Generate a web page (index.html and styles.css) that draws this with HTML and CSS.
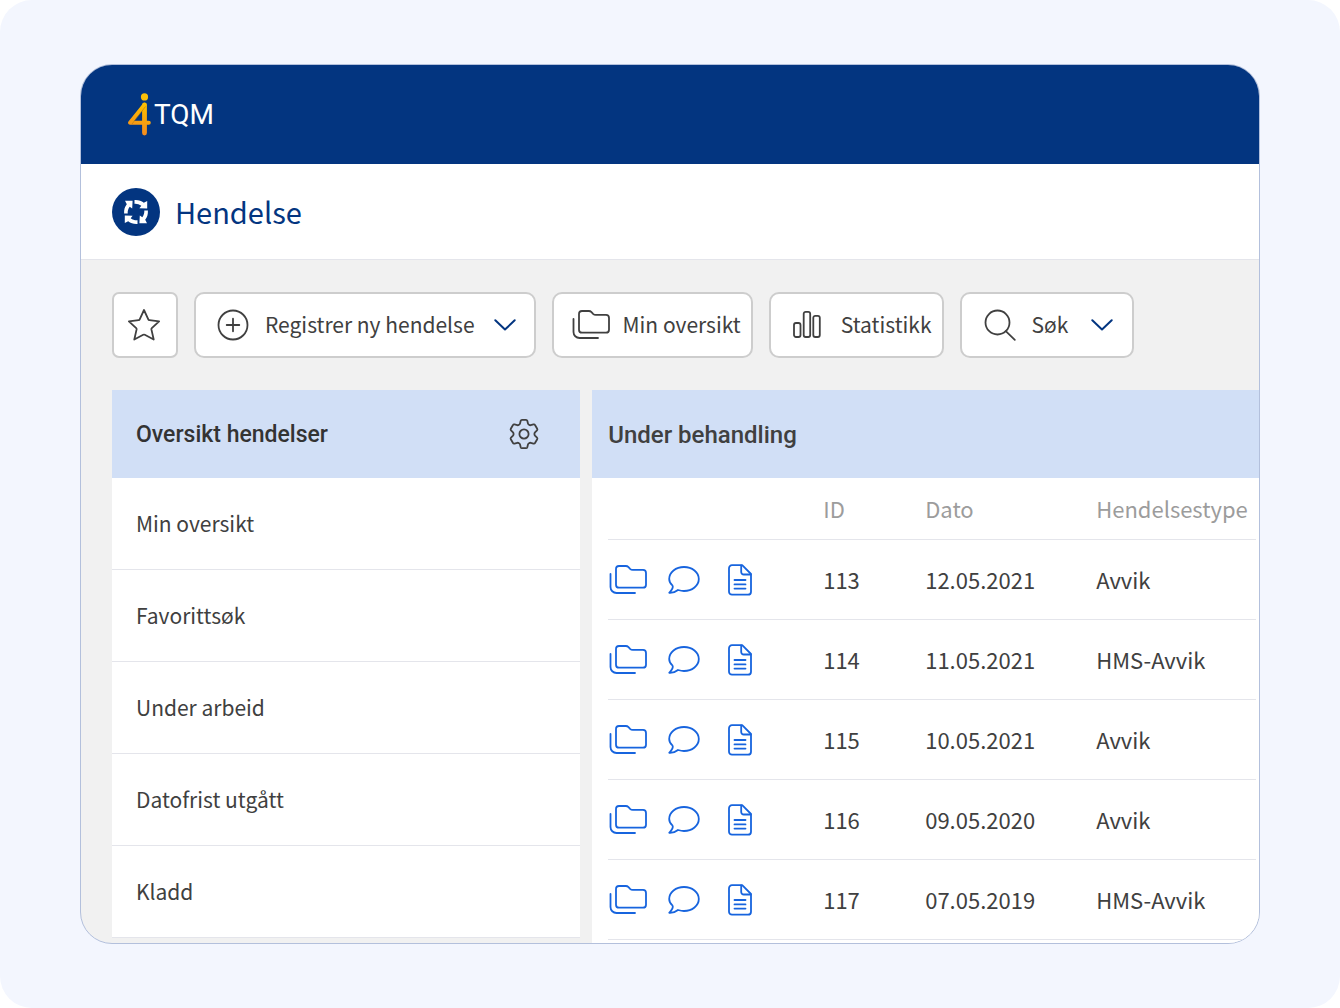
FILE: index.html
```html
<!DOCTYPE html>
<html lang="nb">
<head>
<meta charset="utf-8">
<meta name="viewport" content="width=device-width, initial-scale=1">
<title>4TQM – Hendelse</title>
<link rel="stylesheet" href="styles.css">
</head>
<body>
<svg class="sprite" aria-hidden="true">
  <defs>
    <symbol id="i-folders" viewBox="0 0 38 30">
      <path d="M1.500 9v13a6 6 0 0 0 6 6H26"/>
      <path d="M10 1h6.800q1.600 0 2.700 1.100l1.600 1.700q1.100 1.100 2.700 1.100h10.200a3 3 0 0 1 3 3v11.800a3 3 0 0 1-3 3H10a3 3 0 0 1-3-3V4a3 3 0 0 1 3-3z"/>
    </symbol>
    <symbol id="i-chat" viewBox="0 0 32 28">
      <path d="M4.400 19.400C2.300 17.600 1.200 15.300 1.200 13 1.200 6.400 7.800 1 16 1s14.800 5.400 14.800 12-6.600 12-14.800 12c-2.200 0-4.200-.5-6-1C7.500 26 4.500 27 1.200 26.800 3 25 6 22 4.400 19.400z"/>
    </symbol>
    <symbol id="i-doc" viewBox="0 0 24 32">
      <path d="M4 1.200h10.200L23 10v17.700a3 3 0 0 1-3 3H4a3 3 0 0 1-3-3V4.200a3 3 0 0 1 3-3z"/>
      <path d="M13.200 1.500V8a2.500 2.500 0 0 0 2.500 2.500h7M6.500 16h11M6.500 20.400h11M6.500 24.600h11"/>
    </symbol>
    <symbol id="i-chevron" viewBox="0 0 22 12">
      <path d="M1.300 1.300 11 10.500l9.700-9.200"/>
    </symbol>
  </defs>
</svg>

<div class="stage">
  <div class="window">
    <header class="brand-bar">
      <a class="brand" href="#">
        <svg class="brand-mark" viewBox="0 0 25 44" aria-hidden="true">
          <defs>
            <linearGradient id="gold" gradientUnits="userSpaceOnUse" x1="20" y1="0" x2="8" y2="40">
              <stop offset="0" stop-color="#fdd000"/>
              <stop offset=".5" stop-color="#fbb005"/>
              <stop offset="1" stop-color="#f48a20"/>
            </linearGradient>
          </defs>
          <g stroke="url(#gold)" stroke-linecap="round" stroke-linejoin="round" fill="none">
            <path d="M17.500 12v28" stroke-width="4.800"/>
            <path d="M17.500 11.800 3 29.800h18.800" stroke-width="4"/>
          </g>
          <path d="M18.500 13.500 5 31" stroke="#a8700c" stroke-width=".5"/>
          <circle cx="17.500" cy="3.900" r="3.600" fill="#fbc008"/>
        </svg>
        <span class="brand-name">TQM</span>
      </a>
    </header>

    <div class="title-bar">
      <svg class="title-icon" viewBox="-24 -24 48 48" aria-hidden="true">
        <circle r="24" fill="#033580"/>
        <g fill="#fff">
          <path id="arm" d="M-1.500-11.900C2.500-12.100 5.300-11.200 7.800-9.200L11.200-11V-3.400L3.400-3.800 5.300-6.300C3.300-7.800 1-8.500-1.500-8.300Z"/>
          <use href="#arm" transform="rotate(90)"/>
          <use href="#arm" transform="rotate(180)"/>
          <use href="#arm" transform="rotate(270)"/>
        </g>
      </svg>
      <h1 class="title">Hendelse</h1>
    </div>

    <main class="content">
      <div class="toolbar">
        <button class="tool tool-star" type="button" aria-label="Favoritt">
          <svg class="icon" width="32" height="32" viewBox="0 0 32 32"><path d="M16 1l4.300 9.300q.3.700 1.100.8l9.700 1.200-7.300 6.900q-.5.500-.4 1.200L25.700 30.500l-8.900-4.700q-.8-.4-1.600 0L6.300 30.500l2.300-10.100q.1-.7-.4-1.200L.9 12.300l9.700-1.200q.8-.1 1.100-.8z"/></svg>
        </button>
        <button class="tool tool-new" type="button">
          <svg class="icon" width="32" height="32" viewBox="0 0 32 32"><circle cx="16" cy="16" r="14.500"/><path d="M16 9.700v12.600M9.700 16h12.600"/></svg>
          <span>Registrer ny hendelse</span>
          <svg class="chevron" width="22" height="12"><use href="#i-chevron"/></svg>
        </button>
        <button class="tool tool-overview" type="button">
          <svg class="icon" width="38" height="30"><use href="#i-folders"/></svg>
          <span>Min oversikt</span>
        </button>
        <button class="tool tool-stats" type="button">
          <svg class="icon" width="28" height="30" viewBox="0 0 28 30"><rect x="1" y="13" width="6.500" height="14" rx="2"/><rect x="10.700" y="1.800" width="6.500" height="25.200" rx="2"/><rect x="20.300" y="5.800" width="6.500" height="21.200" rx="2"/></svg>
          <span>Statistikk</span>
        </button>
        <button class="tool tool-search" type="button">
          <svg class="icon" width="32" height="32" viewBox="0 0 32 32"><circle cx="13.500" cy="13.500" r="12"/><path d="M21.800 22.200l9 8.600"/></svg>
          <span>Søk</span>
          <svg class="chevron" width="22" height="12"><use href="#i-chevron"/></svg>
        </button>
      </div>

      <div class="panels">
        <section class="panel">
          <div class="panel-head panel-head-list">
            <h2 class="panel-title">Oversikt hendelser</h2>
            <button class="gear" type="button" aria-label="Innstillinger">
              <svg class="icon" width="32" height="32" viewBox="-16 -16 32 32"><path d="M-2-14.200H2Q3-14.200 3.300-13.200L4-10.400Q4.200-9.600 5-9.200 5.900-8.600 6.700-8.800L9.500-9.600Q10.500-9.900 11-9L13.200-5.300Q13.700-4.400 13-3.700L11-1.700Q10.400-1 10.400 0 10.400 1 11 1.700L13 3.700Q13.700 4.400 13.200 5.300L11 9Q10.500 9.900 9.500 9.600L6.700 8.800Q5.900 8.600 5 9.200 4.200 9.600 4 10.400L3.300 13.200Q3 14.200 2 14.200H-2Q-3 14.200-3.300 13.200L-4 10.400Q-4.200 9.600-5 9.200-5.900 8.600-6.700 8.800L-9.500 9.600Q-10.500 9.900-11 9L-13.200 5.300Q-13.700 4.400-13 3.700L-11 1.700Q-10.400 1-10.400 0-10.400-1-11-1.700L-13-3.700Q-13.700-4.400-13.200-5.300L-11-9Q-10.500-9.900-9.500-9.600L-6.700-8.800Q-5.900-8.600-5-9.200-4.200-9.600-4-10.400L-3.300-13.200Q-3-14.200-2-14.200Z"/><circle r="4.600"/></svg>
            </button>
          </div>
          <nav class="list">
            <a href="#">Min oversikt</a>
            <a href="#">Favorittsøk</a>
            <a href="#">Under arbeid</a>
            <a href="#">Datofrist utgått</a>
            <a href="#">Kladd</a>
          </nav>
        </section>

        <section class="panel panel-table">
          <div class="panel-head panel-head-table">
            <h2 class="panel-title">Under behandling</h2>
          </div>
          <div class="table-wrap">
            <table class="events">
              <colgroup><col class="col-actions"><col class="col-id"><col class="col-date"><col></colgroup>
              <thead>
                <tr><td></td><th scope="col">ID</th><th scope="col">Dato</th><th scope="col">Hendelsestype</th></tr>
              </thead>
              <tbody>
                <tr>
                  <td><div class="actions"><a href="#" aria-label="Mapper"><svg width="38" height="30"><use href="#i-folders"/></svg></a><a href="#" aria-label="Kommentarer"><svg width="32" height="28"><use href="#i-chat"/></svg></a><a href="#" aria-label="Dokument"><svg width="24" height="32"><use href="#i-doc"/></svg></a></div></td>
                  <td>113</td><td>12.05.2021</td><td>Avvik</td>
                </tr>
                <tr>
                  <td><div class="actions"><a href="#" aria-label="Mapper"><svg width="38" height="30"><use href="#i-folders"/></svg></a><a href="#" aria-label="Kommentarer"><svg width="32" height="28"><use href="#i-chat"/></svg></a><a href="#" aria-label="Dokument"><svg width="24" height="32"><use href="#i-doc"/></svg></a></div></td>
                  <td>114</td><td>11.05.2021</td><td>HMS-Avvik</td>
                </tr>
                <tr>
                  <td><div class="actions"><a href="#" aria-label="Mapper"><svg width="38" height="30"><use href="#i-folders"/></svg></a><a href="#" aria-label="Kommentarer"><svg width="32" height="28"><use href="#i-chat"/></svg></a><a href="#" aria-label="Dokument"><svg width="24" height="32"><use href="#i-doc"/></svg></a></div></td>
                  <td>115</td><td>10.05.2021</td><td>Avvik</td>
                </tr>
                <tr>
                  <td><div class="actions"><a href="#" aria-label="Mapper"><svg width="38" height="30"><use href="#i-folders"/></svg></a><a href="#" aria-label="Kommentarer"><svg width="32" height="28"><use href="#i-chat"/></svg></a><a href="#" aria-label="Dokument"><svg width="24" height="32"><use href="#i-doc"/></svg></a></div></td>
                  <td>116</td><td>09.05.2020</td><td>Avvik</td>
                </tr>
                <tr>
                  <td><div class="actions"><a href="#" aria-label="Mapper"><svg width="38" height="30"><use href="#i-folders"/></svg></a><a href="#" aria-label="Kommentarer"><svg width="32" height="28"><use href="#i-chat"/></svg></a><a href="#" aria-label="Dokument"><svg width="24" height="32"><use href="#i-doc"/></svg></a></div></td>
                  <td>117</td><td>07.05.2019</td><td>HMS-Avvik</td>
                </tr>
              </tbody>
            </table>
          </div>
        </section>
      </div>
    </main>
  </div>
</div>
</body>
</html>
```

FILE: styles.css
```css
:root {
  --navy: #033580;
  --blue: #1764de;
  --ink: #404040;
  --muted: #9c9c9c;
  --line: #e4e5eb;
  --grey: #f1f1f1;
  --pale: #d1dff6;
}

*,
*::before,
*::after {
  box-sizing: border-box;
}

body {
  margin: 0;
  background: #fff;
  color: var(--ink);
  font: 21px/32px "Noto Sans CJK SC", "Noto Sans", sans-serif;
}

.sprite {
  position: absolute;
  width: 0;
  height: 0;
}

h1,
h2 {
  margin: 0;
}

a {
  color: inherit;
  text-decoration: none;
}

button {
  font: inherit;
  color: inherit;
  cursor: pointer;
}

.stage {
  display: flex;
  min-height: 100vh;
  padding: 64px 80px;
  border-radius: 32px;
  background: #f3f6fe;
}

.window {
  display: flex;
  flex: 1;
  flex-direction: column;
  min-width: 0;
  overflow: hidden;
  border: 1px solid #b3c0dc;
  border-radius: 32px;
  background: var(--grey);
}

/* Brand bar */
.brand-bar {
  display: flex;
  align-items: center;
  height: 99px;
  padding: 0 46px;
  background: var(--navy);
}

.brand {
  display: flex;
  align-items: center;
  color: #fff;
}

.brand-mark {
  width: 25px;
  height: 44px;
}

.brand-name {
  padding-left: 2px;
  font: 28px/32px Roboto, sans-serif;
}

/* Page title */
.title-bar {
  display: flex;
  align-items: center;
  gap: 15px;
  height: 96px;
  padding: 0 31px;
  border-bottom: 1px solid var(--line);
  background: #fff;
}

.title-icon {
  width: 48px;
  height: 48px;
}

.title {
  padding-bottom: 2px;
  color: var(--navy);
  font-size: 29px;
  font-weight: 400;
}

/* Toolbar */
.content {
  display: flex;
  flex: 1;
  flex-direction: column;
  gap: 32px;
  padding: 32px 0 0 31px;
}

.toolbar {
  display: flex;
  flex-wrap: wrap;
  gap: 16px;
}

.tool {
  display: flex;
  align-items: center;
  height: 66px;
  border: 2px solid #cdcdcd;
  border-radius: 10px;
  background: #fff;
  white-space: nowrap;
}

.tool span {
  padding-bottom: 2px;
}

.tool-star {
  justify-content: center;
  width: 66px;
  padding: 0 2px 0 0;
  border-radius: 7px;
}

.tool-new {
  gap: 16px;
  padding: 0 18px 0 21px;
}

.tool-new .chevron {
  margin-left: 3px;
}

.tool-overview {
  gap: 13px;
  padding: 0 10px 0 18px;
}

.tool-stats {
  gap: 20px;
  padding: 0 10px 0 22px;
}

.tool-search {
  gap: 16px;
  padding: 0 19px 0 22px;
}

.tool-search .chevron {
  margin-left: 7px;
}

.icon,
.chevron,
.actions svg {
  display: block;
  flex: none;
  fill: none;
  stroke: currentColor;
  stroke-width: 1.8;
  stroke-linecap: round;
  stroke-linejoin: round;
}

.chevron {
  color: var(--navy);
  stroke-width: 2;
}

/* Panels */
.panels {
  display: grid;
  flex: 1;
  grid-template-columns: minmax(0, 33fr) minmax(0, 47fr);
  align-items: start;
  gap: 12px;
}

.panel {
  background: #fff;
}

.panel-table {
  align-self: stretch;
}

.panel-head {
  display: flex;
  align-items: center;
  justify-content: space-between;
  height: 88px;
  background: var(--pale);
}

.panel-head-list {
  padding: 0 40px 0 24px;
  color: #333;
}

.panel-head-table {
  padding: 0 16px;
}

.panel-title {
  padding-top: 2px;
  font: 500 23px/32px Roboto, sans-serif;
}

.panel-head-table .panel-title {
  font-size: 24px;
}

.gear {
  padding: 0;
  border: 0;
  background: none;
  color: var(--ink);
}

.list a {
  display: flex;
  align-items: center;
  height: 92px;
  padding: 0 24px 2px;
  border-bottom: 1px solid var(--line);
}

/* Events table */
.table-wrap {
  padding: 0 3px 3px 16px;
}

.events {
  width: 100%;
  border-collapse: separate;
  border-spacing: 0;
  table-layout: fixed;
  font-size: 22px;
}

.col-actions {
  width: 215px;
}

.col-id {
  width: 102px;
}

.col-date {
  width: 171px;
}

.events th,
.events td {
  height: 80px;
  padding: 0 0 2px;
  border-bottom: 1px solid var(--line);
  text-align: left;
  white-space: nowrap;
}

.events thead th,
.events thead td {
  height: 62px;
  color: var(--muted);
  font-weight: 400;
}

.actions {
  display: flex;
  align-items: center;
  padding: 2px 0 0 1px;
  color: var(--blue);
}

.actions a {
  flex: none;
}

.actions a + a {
  margin-left: 21px;
}

.actions a + a + a {
  margin-left: 28px;
}
```
